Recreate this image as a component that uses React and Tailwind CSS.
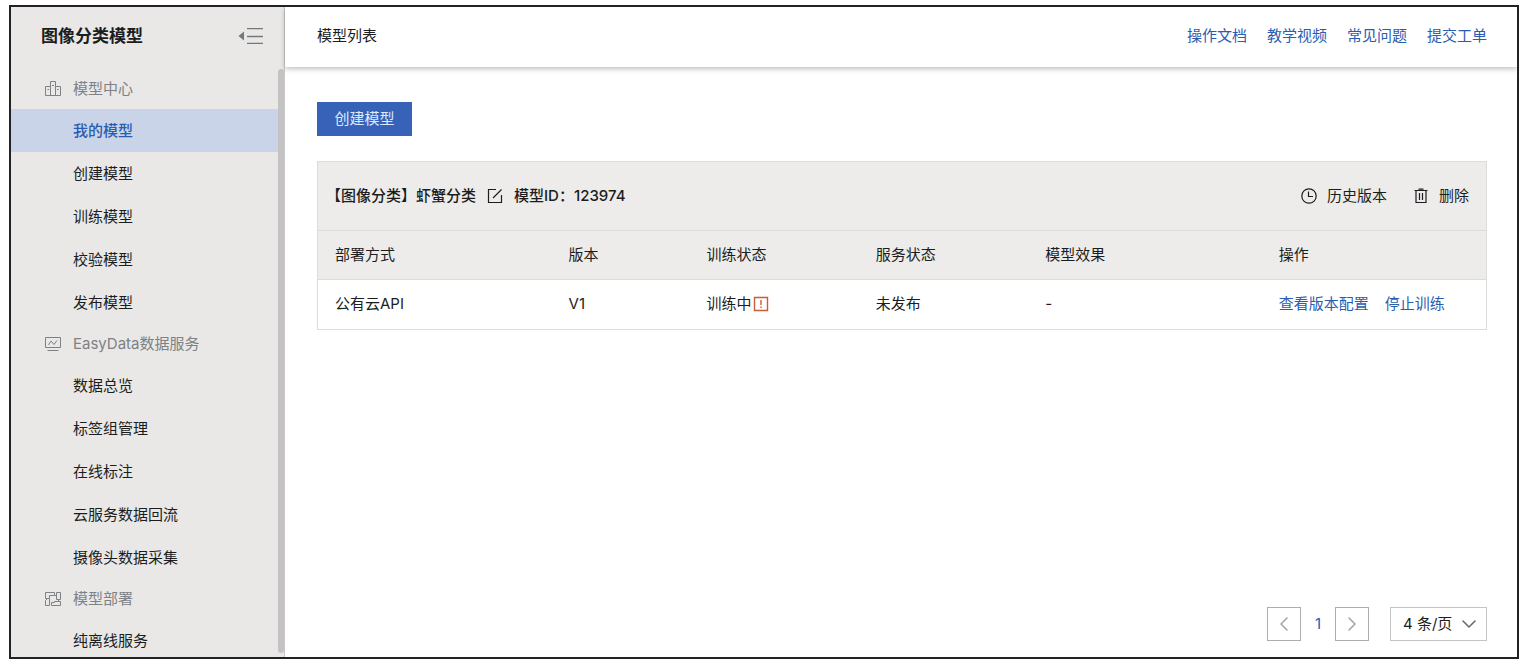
import { ChevronDown, ChevronLeft, ChevronRight } from "lucide-react";

const menu = [
  {
    title: "模型中心",
    icon: "center",
    items: ["我的模型", "创建模型", "训练模型", "校验模型", "发布模型"],
  },
  {
    title: "EasyData数据服务",
    icon: "data",
    items: ["数据总览", "标签组管理", "在线标注", "云服务数据回流", "摄像头数据采集"],
  },
  {
    title: "模型部署",
    icon: "deploy",
    items: ["纯离线服务"],
  },
];

const helpLinks = ["操作文档", "教学视频", "常见问题", "提交工单"];

const rows = [{ deploy: "公有云API", version: "V1", training: "训练中", service: "未发布", effect: "-" }];

const iconPaths = {
  center: "M5.5 14.5V.5h5v14M5.5 5.5h-5v9h15v-9h-5M7 4.5h2M2.5 8.5H4M12 8.5h1.5",
  data: "M.5 1.5h15v10H.5zM3.5 9l2.5-4 3 3.5L12 4.5M2.5 14.5h11",
  deploy: "M.5 1.5h9v3h-5v3h-4zM4.5 7.5v7h-4v-5l2-2M11.5 1.5h4v7h-4zM13.5 8.5v2M9.5 4.5h2M6.5 11.5h3v-1h6v4h-9z",
};

const MenuIcon = ({ name }) => (
  <svg className="size-4 shrink-0" viewBox="0 0 16 16" fill="none" stroke="currentColor" aria-hidden="true">
    <path d={iconPaths[name]} />
  </svg>
);

const Sidebar = () => (
  <aside className="flex w-[274px] shrink-0 flex-col border-r border-[#c9c8c8] bg-[#e9e8e7]">
    <div className="flex h-[62px] shrink-0 items-center justify-between pr-5 pb-1 pl-[30px]">
      <h1 className="text-[17px] font-bold">图像分类模型</h1>
      <button type="button" aria-label="收起菜单" className="text-[#74777b]">
        <svg className="h-4 w-[26px]" viewBox="0 0 26 16" fill="none" stroke="currentColor">
          <path d="M9 .5h16M9 8.5h16M9 15.5h16" strokeWidth="1.3" />
          <path d="M6 3.5v9L.5 8z" fill="currentColor" stroke="none" />
        </svg>
      </button>
    </div>
    <div className="flex min-h-0 flex-1">
      <nav className="min-w-0 flex-1 overflow-hidden">
        {menu.map((group) => (
          <div key={group.title}>
            <h2 className="flex h-10 items-center gap-3 pl-[34px] text-[#7e8185]">
              <MenuIcon name={group.icon} />
              {group.title}
            </h2>
            <ul>
              {group.items.map((item) => (
                <li key={item}>
                  <a href="#" className={`flex h-[43px] items-center pl-[62px] ${item === "我的模型" ? "bg-[#c9d4e9] font-medium text-[#2a5caf]" : ""}`}>
                    {item}
                  </a>
                </li>
              ))}
            </ul>
          </div>
        ))}
      </nav>
      <div className="mb-1 w-1.5 shrink-0 rounded-full bg-[#c4c2c3]" />
    </div>
  </aside>
);

const ModelCard = () => (
  <section className="mt-[25px] border border-[#dcdcdb]">
    <div className="flex h-[68px] items-center justify-between bg-[#edecea] pr-[17px] pl-2">
      <h3 className="flex items-center font-medium">
        【图像分类】虾蟹分类
        <button type="button" aria-label="编辑名称" className="mx-[11px]">
          <svg className="size-4" viewBox="0 0 16 16" fill="none" stroke="currentColor" strokeWidth="1.2">
            <path d="M9 1.5H1.5v13h13V7M6 10l8.5-8.5" />
          </svg>
        </button>
        模型ID：123974
      </h3>
      <div className="flex items-center gap-[26px]">
        <button type="button" className="flex items-center gap-2.5">
          <svg className="size-4" viewBox="0 0 16 16" fill="none" stroke="currentColor" strokeWidth="1.2">
            <circle cx="8" cy="8" r="7.2" />
            <path d="M7.5 3.5v5H12" />
          </svg>
          历史版本
        </button>
        <button type="button" className="flex items-center gap-2.5">
          <svg className="size-4" viewBox="0 0 16 16" fill="none" stroke="currentColor" strokeWidth="1.2">
            <path d="M1.5 2.5h13M5.5 1.2h5M3 2.5v12h10v-12M6.5 5v7M9.5 5v7" />
          </svg>
          删除
        </button>
      </div>
    </div>
    <table className="w-full table-fixed text-left">
      <thead className="border-y border-[#dcdcdb] bg-[#edecea]">
        <tr className="h-[49px]">
          <th className="w-[20%] pl-[17px] font-normal">部署方式</th>
          <th className="w-[11.8%] pl-[17px] font-normal">版本</th>
          <th className="w-[14.5%] pl-[17px] font-normal">训练状态</th>
          <th className="w-[14.5%] pl-[17px] font-normal">服务状态</th>
          <th className="w-[20%] pl-[17px] font-normal">模型效果</th>
          <th className="pl-[17px] font-normal">操作</th>
        </tr>
      </thead>
      <tbody>
        {rows.map((row) => (
          <tr key={row.version} className="h-[49px]">
            <td className="pl-[17px]">{row.deploy}</td>
            <td className="pl-[17px]">{row.version}</td>
            <td className="pl-[17px]">
              <div className="flex items-center gap-0.5">
                {row.training}
                <svg className="size-4 text-[#cf5a37]" viewBox="0 0 16 16" fill="none" stroke="currentColor" strokeWidth="1.4" aria-hidden="true">
                  <path d="M1.5 1.5h13v13h-13zM8 4v5M8 10.5V12" />
                </svg>
              </div>
            </td>
            <td className="pl-[17px]">{row.service}</td>
            <td className="pl-[17px]">{row.effect}</td>
            <td className="pl-[17px]">
              <div className="flex gap-4 whitespace-nowrap text-[#2a5caf]">
                <a href="#">查看版本配置</a>
                <a href="#">停止训练</a>
              </div>
            </td>
          </tr>
        ))}
      </tbody>
    </table>
  </section>
);

const Pagination = () => (
  <div className="mt-auto flex items-center justify-end">
    <button type="button" aria-label="上一页" className="flex size-[34px] items-center justify-center border border-[#adadad] text-[#a6a6a6]">
      <ChevronLeft size={24} strokeWidth={1.6} />
    </button>
    <a href="#" className="w-[34px] text-center text-[#2a5caf]">
      1
    </a>
    <button type="button" aria-label="下一页" className="flex size-[34px] items-center justify-center border border-[#adadad] text-[#a6a6a6]">
      <ChevronRight size={24} strokeWidth={1.6} />
    </button>
    <div className="relative ml-[21px]">
      <select aria-label="每页条数" defaultValue="4" className="h-[34px] w-[97px] appearance-none border border-[#c4c4c4] bg-white pl-3">
        <option value="4">4 条/页</option>
        <option value="8">8 条/页</option>
      </select>
      <ChevronDown size={24} strokeWidth={1.6} className="pointer-events-none absolute top-[5px] right-1.5 text-[#6b6b6b]" />
    </div>
  </div>
);

const App = () => {
  return (
    <div className="h-screen bg-white pt-[5px] pr-[11px] pb-1 pl-[9px] font-['Inter','Noto_Sans_CJK_SC',sans-serif] text-[15px] leading-5 text-[#1c1d20]">
      <div className="flex h-full overflow-hidden border-2 border-[#222124]">
        <Sidebar />
        <main className="flex min-w-0 flex-1 flex-col">
          <header className="flex h-[60px] shrink-0 items-center justify-between pr-[30px] pb-0.5 pl-8 shadow-[0_2px_5px_rgba(0,0,0,0.25)]">
            <h2>模型列表</h2>
            <nav className="flex gap-5 text-[#2a5caf]">
              {helpLinks.map((link) => (
                <a key={link} href="#">
                  {link}
                </a>
              ))}
            </nav>
          </header>
          <div className="flex flex-1 flex-col pt-[35px] pr-[30px] pb-4 pl-8">
            <button type="button" className="h-[34px] w-[95px] bg-[#3862b8] text-[#dce9ff]">
              创建模型
            </button>
            <ModelCard />
            <Pagination />
          </div>
        </main>
      </div>
    </div>
  );
};

export default App;
